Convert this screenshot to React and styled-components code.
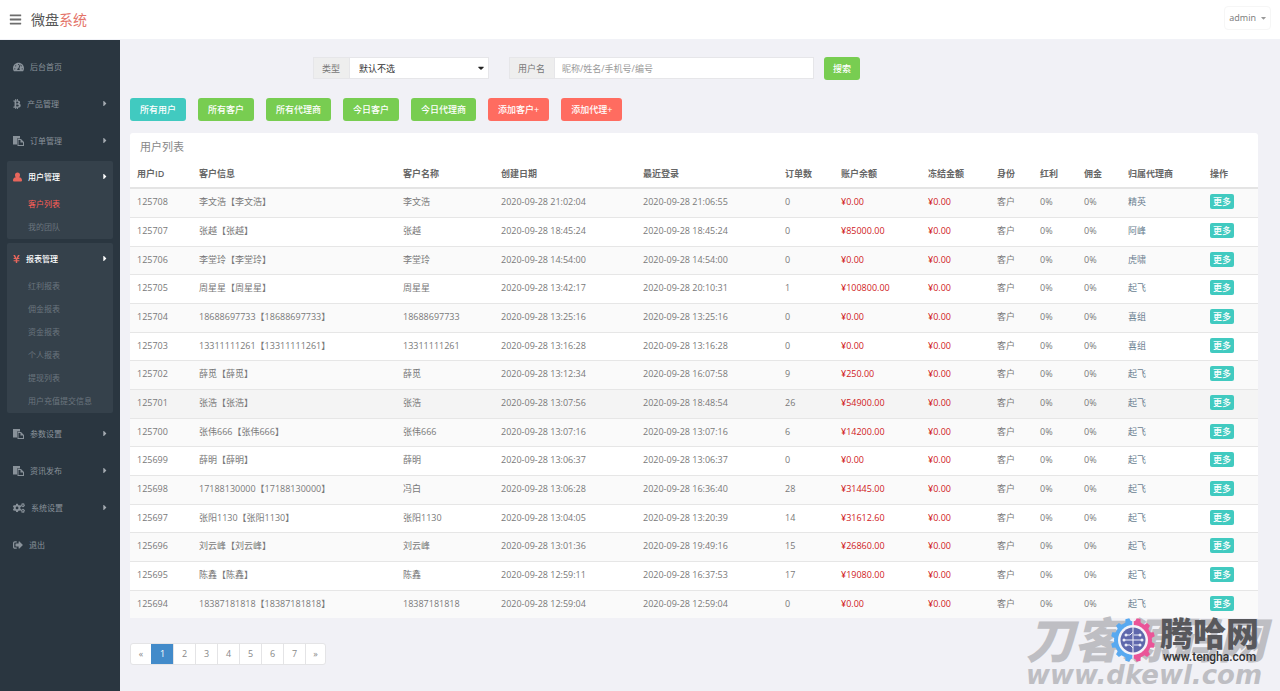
import React, { useState } from "react";
import styled, { createGlobalStyle, css } from "styled-components";
import {
  FaBars,
  FaBtc,
  FaCaretDown,
  FaCaretRight,
  FaCogs,
  FaSignOutAlt,
  FaTachometerAlt,
  FaYenSign,
} from "react-icons/fa";

const GlobalStyle = createGlobalStyle`
  * {
    box-sizing: border-box;
  }
  body {
    margin: 0;
    background: #f1f1f6;
    color: #797979;
    font-family: "Open Sans", "Noto Sans CJK SC", sans-serif;
    font-size: 9px;
    line-height: 13px;
  }
  a {
    text-decoration: none;
    color: inherit;
  }
  ul {
    list-style: none;
    margin: 0;
    padding: 0;
  }
  button,
  input,
  select {
    font-family: inherit;
    font-size: inherit;
    line-height: inherit;
    margin: 0;
  }
`;

const Page = styled.div`
  position: relative;
  display: flex;
  flex-direction: column;
  min-height: 100vh;
  overflow: hidden;
`;

const Header = styled.header`
  display: flex;
  align-items: center;
  height: 40px;
  padding: 0 9px;
  background: #fff;
  border-bottom: 1px solid #f1f2f7;
`;

const ToggleButton = styled.button`
  display: flex;
  padding: 0;
  border: 0;
  background: none;
  color: #6d6d6d;
  font-size: 13px;
  cursor: pointer;
`;

const Logo = styled.a`
  margin-left: 9px;
  font-size: 14px;
  line-height: 20px;
  color: #555;

  span {
    color: #e4746a;
  }
`;

const UserMenu = styled.button`
  display: flex;
  align-items: center;
  gap: 5px;
  height: 24px;
  margin-left: auto;
  margin-top: -4px;
  padding: 0 4px;
  border: 1px solid #f6f6f6;
  border-radius: 4px;
  background: #fff;
  color: #777;
  cursor: pointer;

  svg {
    width: 5px;
    height: 8px;
    color: #999;
  }
`;

const Body = styled.div`
  display: flex;
  flex: 1;
`;

const Sidebar = styled.nav`
  flex: none;
  width: 120px;
  padding: 10px 7px;
  background: #2a3640;
`;

const Menu = styled.ul`
  display: flex;
  flex-direction: column;
  gap: 4px;
`;

const MenuGroup = styled.li`
  border-radius: 2px;
  font-size: 8px;

  ${(props) =>
    props.$open &&
    css`
      padding-bottom: 1px;
      background: #35414b;
    `}
`;

const MenuLink = styled.a`
  display: flex;
  align-items: center;
  gap: 6px;
  height: ${(props) => (props.$open ? 31 : 33)}px;
  padding: 0 6px;
  color: ${(props) => (props.$open ? "#fff" : "#89929a")};
  font-weight: ${(props) => (props.$open ? 500 : 400)};

  svg {
    width: ${(props) => props.$iconWidth}px;
    height: 10px;
    color: ${(props) => (props.$open ? "#e8665c" : "#89929a")};
  }

  svg:last-child:not(:first-child) {
    width: 4px;
    height: 9px;
    margin-left: auto;
    color: ${(props) => (props.$open ? "#fff" : "#a5acb2")};
  }
`;

const SubLink = styled.a`
  display: flex;
  align-items: center;
  height: 23px;
  padding-left: 21px;
  color: ${(props) => (props.$active ? "#ff5f57" : "#6b757e")};
`;

const Main = styled.main`
  flex: 1;
  min-width: 0;
  padding: 17px 22px 26px 10px;
`;

const SearchForm = styled.form`
  display: flex;
  padding-left: 183px;
`;

const InputGroup = styled.div`
  display: flex;
  height: 22px;
  width: ${(props) => props.$width}px;
  margin-right: ${(props) => props.$gap}px;
  border: 1px solid #e6e6e9;
  background: #fff;
`;

const Addon = styled.label`
  display: flex;
  align-items: center;
  padding: 0 9px 0 8px;
  border-right: 1px solid #e6e6e9;
  background: #eee;
  color: #777;
`;

const SelectBox = styled.div`
  position: relative;
  display: flex;
  flex: 1;

  select {
    flex: 1;
    appearance: none;
    padding: 0 9px;
    border: 0;
    background: transparent;
    color: #333;
  }

  svg {
    position: absolute;
    right: 4px;
    top: 5px;
    width: 6px;
    height: 10px;
    color: #222;
    pointer-events: none;
  }
`;

const TextInput = styled.input`
  flex: 1;
  min-width: 0;
  padding: 0 7px;
  border: 0;
  background: #fff;
  color: #555;

  &::placeholder {
    color: #999;
    opacity: 1;
  }
`;

const colors = {
  teal: "#41cac0",
  green: "#78cd51",
  red: "#ff6c60",
};

const Button = styled.button`
  height: ${(props) => (props.$small ? 15 : 23)}px;
  padding: 0 ${(props) => (props.$small ? 3 : 9)}px;
  border: 0;
  border-radius: ${(props) => (props.$small ? 2 : 3)}px;
  background: ${(props) => colors[props.$color]};
  color: #fff;
  font-weight: 500;
  white-space: nowrap;
  cursor: pointer;
`;

const Actions = styled.div`
  display: flex;
  gap: 12px;
  margin-top: 18px;

  ${Button} {
    padding: 0 10px;
  }
`;

const Panel = styled.section`
  margin-top: 12px;
  background: #fff;
  border-radius: 3px;
`;

const PanelTitle = styled.h2`
  margin: 0;
  padding: 5px 10px;
  font-size: 11px;
  font-weight: 400;
  line-height: 18px;
  color: #888;
`;

const Table = styled.table`
  width: 100%;
  table-layout: fixed;
  border-collapse: collapse;

  th,
  td {
    padding: 0 7px 2px;
    text-align: left;
    vertical-align: middle;
    white-space: nowrap;
  }

  th {
    height: 27px;
    border-bottom: 2px solid #e4e4e4;
    color: #666;
    font-weight: 600;
  }

  td {
    height: 29px;
    border-top: 1px solid #e6e6e6;
  }

  tbody tr:nth-child(3n) td {
    height: 28px;
  }

  tbody tr:first-child td {
    border-top: 0;
  }

  tbody tr:nth-child(odd) {
    background: #fafafa;
  }
`;

const Row = styled.tr`
  && td {
    background: ${(props) => (props.$selected ? "#f4f4f4" : "transparent")};
  }
`;

const Money = styled.span`
  color: #d0211c;
`;

const AgentLink = styled.a`
  color: #6b7f91;
`;

const Pagination = styled.ul`
  display: flex;
  width: max-content;
  margin-top: 25px;
  border: 1px solid #e4e4e6;
  border-radius: 3px;
  background: #fff;
`;

const PageLink = styled.a`
  display: block;
  width: 22px;
  line-height: 20px;
  text-align: center;
  border-left: 1px solid ${(props) => (props.$active ? "#428bca" : "#e4e4e6")};
  background: ${(props) => (props.$active ? "#428bca" : "transparent")};
  color: ${(props) => (props.$active ? "#fff" : "#888")};

  li:first-child & {
    width: 20px;
    border-left: 0;
  }

  li:last-child & {
    width: 20px;
  }
`;

const Watermark = styled.div`
  position: absolute;
  right: 8px;
  bottom: 0;
  width: 246px;
  color: #bebec3;
  font-style: italic;
  font-weight: 900;
  white-space: nowrap;
  pointer-events: none;
`;

const WatermarkName = styled.div`
  font-size: 48px;
  line-height: 40px;
`;

const WatermarkUrl = styled.div`
  font-family: "DejaVu Sans", sans-serif;
  font-size: 26px;
  line-height: 31px;
`;

const Brand = styled.div`
  position: absolute;
  right: 21px;
  bottom: 28px;
  display: flex;
  align-items: center;
  gap: 5px;
  color: #58585c;
  white-space: nowrap;
  pointer-events: none;
`;

const BrandName = styled.div`
  font-size: 33px;
  font-weight: 900;
  line-height: 34px;
`;

const BrandUrl = styled.div`
  font-family: Roboto, sans-serif;
  font-size: 12px;
  font-weight: 500;
  line-height: 12px;
  text-align: center;
  color: #333;
`;

const menu = [
  { icon: <FaTachometerAlt />, iconWidth: 11, name: "后台首页", leaf: true },
  { icon: <FaBtc />, iconWidth: 8, name: "产品管理" },
  { icon: <PasteIcon />, iconWidth: 11, name: "订单管理" },
  {
    icon: <UserIcon />,
    iconWidth: 9,
    name: "用户管理",
    items: ["客户列表", "我的团队"],
  },
  {
    icon: <FaYenSign />,
    iconWidth: 7,
    name: "报表管理",
    items: [
      "红利报表",
      "佣金报表",
      "资金报表",
      "个人报表",
      "提现列表",
      "用户充值提交信息",
    ],
  },
  { icon: <PasteIcon />, iconWidth: 11, name: "参数设置" },
  { icon: <PasteIcon />, iconWidth: 11, name: "资讯发布" },
  { icon: <FaCogs />, iconWidth: 12, name: "系统设置" },
  { icon: <FaSignOutAlt />, iconWidth: 10, name: "退出", leaf: true },
];

const actions = [
  ["所有用户", "teal"],
  ["所有客户", "green"],
  ["所有代理商", "green"],
  ["今日客户", "green"],
  ["今日代理商", "green"],
  ["添加客户+", "red"],
  ["添加代理+", "red"],
];

const columns = [
  ["用户ID", 62],
  ["客户信息", 204],
  ["客户名称", 98],
  ["创建日期", 142],
  ["最近登录", 142],
  ["订单数", 56],
  ["账户余额", 87],
  ["冻结金额", 69],
  ["身份", 43],
  ["红利", 44],
  ["佣金", 44],
  ["归属代理商", 82],
  ["操作", 55],
];

// id, info, name, created, last login, orders, balance, agent
const users = [
  [125708, "李文浩【李文浩】", "李文浩", "21:02:04", "21:06:55", 0, "0.00", "精英"],
  [125707, "张越【张越】", "张越", "18:45:24", "18:45:24", 0, "85000.00", "阿峰"],
  [125706, "李堂玲【李堂玲】", "李堂玲", "14:54:00", "14:54:00", 0, "0.00", "虎啸"],
  [125705, "周星星【周星星】", "周星星", "13:42:17", "20:10:31", 1, "100800.00", "起飞"],
  [125704, "18688697733【18688697733】", "18688697733", "13:25:16", "13:25:16", 0, "0.00", "喜组"],
  [125703, "13311111261【13311111261】", "13311111261", "13:16:28", "13:16:28", 0, "0.00", "喜组"],
  [125702, "薛觅【薛觅】", "薛觅", "13:12:34", "16:07:58", 9, "250.00", "起飞"],
  [125701, "张浩【张浩】", "张浩", "13:07:56", "18:48:54", 26, "54900.00", "起飞"],
  [125700, "张伟666【张伟666】", "张伟666", "13:07:16", "13:07:16", 6, "14200.00", "起飞"],
  [125699, "薛明【薛明】", "薛明", "13:06:37", "13:06:37", 0, "0.00", "起飞"],
  [125698, "17188130000【17188130000】", "冯白", "13:06:28", "16:36:40", 28, "31445.00", "起飞"],
  [125697, "张阳1130【张阳1130】", "张阳1130", "13:04:05", "13:20:39", 14, "31612.60", "起飞"],
  [125696, "刘云峰【刘云峰】", "刘云峰", "13:01:36", "19:49:16", 15, "26860.00", "起飞"],
  [125695, "陈鑫【陈鑫】", "陈鑫", "12:59:11", "16:37:53", 17, "19080.00", "起飞"],
  [125694, "18387181818【18387181818】", "18387181818", "12:59:04", "12:59:04", 0, "0.00", "起飞"],
];

const day = "2020-09-28";

function UserIcon() {
  return (
    <svg viewBox="1 0 18 20" fill="currentColor">
      <path d="M10 1a5 5 0 0 1 5 5c0 2-.8 3.800-2 4.700 4.200.2 6 3.300 6 6.300 0 1.500-1.200 2-2.500 2h-13C2.200 19 1 18.500 1 17c0-3 1.800-6.100 6-6.300C5.800 9.800 5 8 5 6a5 5 0 0 1 5-5z" />
    </svg>
  );
}

function PasteIcon() {
  return (
    <svg viewBox="0 0 22 20" fill="currentColor">
      <path d="M0 0h14v5H8v12H0z" />
      <path
        fillRule="evenodd"
        d="M9 6h7l6 6v8H9zM11 8v10h9v-5h-5V8z"
      />
    </svg>
  );
}

const teeth = [0, 30, 60, 90, 120, 150];

function Gear({ color, clip }) {
  return (
    <g fill={color} clipPath={`url(#${clip})`}>
      <circle cx="22" cy="22" r="19" />
      {teeth.map((angle) => (
        <path
          key={angle}
          d="M19 4l1-4h4l1 4v36l-1 4h-4l-1-4z"
          transform={`rotate(${angle + 15} 22 22)`}
        />
      ))}
    </g>
  );
}

function BrandLogo() {
  return (
    <svg width="44" height="44" viewBox="0 0 44 44">
      <clipPath id="gear-left">
        <rect width="21.500" height="44" />
      </clipPath>
      <clipPath id="gear-right">
        <rect x="22.500" width="21.500" height="44" />
      </clipPath>
      <Gear color="#58a9f0" clip="gear-left" />
      <Gear color="#ea5598" clip="gear-right" />
      <circle cx="22" cy="22" r="15" fill="#f4f4fa" />
      <circle cx="22" cy="22" r="12.500" fill="#5f68ac" />
      <g stroke="#eceef8" strokeWidth="1" fill="none">
        <path d="M15 17h4l3-3M13 22h9M15 27h4l3 3M23 17h7M22 22h9M23 27h6" />
        <path d="M22 0v44" stroke="#f6f6fb" />
      </g>
      <g fill="#eceef8">
        <circle cx="15" cy="17" r="1.500" />
        <circle cx="13" cy="22" r="1.500" />
        <circle cx="15" cy="27" r="1.500" />
        <circle cx="29" cy="17" r="1.500" />
        <circle cx="31" cy="22" r="1.500" />
        <circle cx="29" cy="27" r="1.500" />
      </g>
    </svg>
  );
}

const SideMenu = () => (
  <Sidebar>
    <Menu>
      {menu.map(({ icon, iconWidth, name, leaf, items }) => (
        <MenuGroup key={name} $open={!!items}>
          <MenuLink href="#" $open={!!items} $iconWidth={iconWidth}>
            {icon}
            <span>{name}</span>
            {!leaf && <FaCaretRight />}
          </MenuLink>
          {items && (
            <ul>
              {items.map((item) => (
                <li key={item}>
                  <SubLink href="#" $active={item === "客户列表"}>
                    {item}
                  </SubLink>
                </li>
              ))}
            </ul>
          )}
        </MenuGroup>
      ))}
    </Menu>
  </Sidebar>
);

const UserTable = () => (
  <Table>
    <colgroup>
      {columns.map(([name, width]) => (
        <col key={name} style={{ width }} />
      ))}
    </colgroup>
    <thead>
      <tr>
        {columns.map(([name]) => (
          <th key={name}>{name}</th>
        ))}
      </tr>
    </thead>
    <tbody>
      {users.map(([id, info, name, created, login, orders, balance, agent]) => (
        <Row key={id} $selected={id === 125701}>
          <td>{id}</td>
          <td>{info}</td>
          <td>{name}</td>
          <td>{`${day} ${created}`}</td>
          <td>{`${day} ${login}`}</td>
          <td>{orders}</td>
          <td>
            <Money>¥{balance}</Money>
          </td>
          <td>
            <Money>¥0.00</Money>
          </td>
          <td>客户</td>
          <td>0%</td>
          <td>0%</td>
          <td>
            <AgentLink href="#">{agent}</AgentLink>
          </td>
          <td>
            <Button type="button" $color="teal" $small>
              更多
            </Button>
          </td>
        </Row>
      ))}
    </tbody>
  </Table>
);

const App = () => {
  const [page, setPage] = useState("1");

  return (
    <Page>
      <GlobalStyle />
      <Header>
        <ToggleButton type="button" aria-label="菜单">
          <FaBars />
        </ToggleButton>
        <Logo href="#">
          微盘<span>系统</span>
        </Logo>
        <UserMenu type="button">
          admin
          <FaCaretDown />
        </UserMenu>
      </Header>
      <Body>
        <SideMenu />
        <Main>
          <SearchForm onSubmit={(e) => e.preventDefault()}>
            <InputGroup $width={176} $gap={20}>
              <Addon htmlFor="type">类型</Addon>
              <SelectBox>
                <select id="type">
                  <option>默认不选</option>
                </select>
                <FaCaretDown />
              </SelectBox>
            </InputGroup>
            <InputGroup $width={305} $gap={10}>
              <Addon htmlFor="username">用户名</Addon>
              <TextInput id="username" placeholder="昵称/姓名/手机号/编号" />
            </InputGroup>
            <Button type="submit" $color="green">
              搜索
            </Button>
          </SearchForm>
          <Actions>
            {actions.map(([name, color]) => (
              <Button key={name} type="button" $color={color}>
                {name}
              </Button>
            ))}
          </Actions>
          <Panel>
            <PanelTitle>用户列表</PanelTitle>
            <UserTable />
          </Panel>
          <Pagination>
            {["«", "1", "2", "3", "4", "5", "6", "7", "»"].map((label) => (
              <li key={label}>
                <PageLink
                  href="#"
                  $active={label === page}
                  onClick={() => setPage(label)}
                >
                  {label}
                </PageLink>
              </li>
            ))}
          </Pagination>
        </Main>
      </Body>
      <Watermark>
        <WatermarkName>刀客源码网</WatermarkName>
        <WatermarkUrl>www.dkewl.com</WatermarkUrl>
      </Watermark>
      <Brand>
        <BrandLogo />
        <div>
          <BrandName>腾哈网</BrandName>
          <BrandUrl>www.tengha.com</BrandUrl>
        </div>
      </Brand>
    </Page>
  );
};

export default App;
